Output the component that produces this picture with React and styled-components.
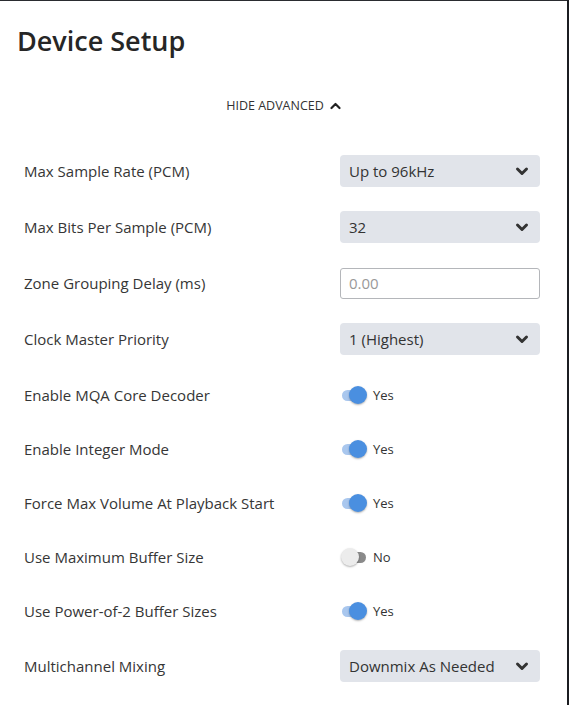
import React, { useState } from 'react';
import styled, { createGlobalStyle } from 'styled-components';

const GlobalStyle = createGlobalStyle`
  html, body {
    margin: 0;
    padding: 0;
    background: #1b1d21;
  }
  body {
    font-family: 'Open Sans', 'Noto Sans', sans-serif;
    color: #333;
  }
`;

const Dialog = styled.div`
  width: 567px;
  height: 705px;
  box-sizing: border-box;
  background: #fff;
  border-top: 1px solid #2a2c30;
  overflow: hidden;
`;

const Title = styled.h1`
  margin: 0;
  padding: 20px 0 0 17px;
  font-size: 27px;
  line-height: 40px;
  font-weight: 600;
  color: #262626;
`;

const AdvancedToggle = styled.button`
  display: flex;
  align-items: center;
  gap: 6px;
  margin: 35px auto 0;
  padding: 0;
  border: none;
  background: none;
  font-family: inherit;
  font-size: 12.5px;
  line-height: 20px;
  color: #333;
  text-transform: uppercase;
  cursor: pointer;
`;

const Settings = styled.div`
  margin-top: 26px;
  padding: 0 27px 0 24px;
`;

const Row = styled.div`
  display: flex;
  align-items: center;
  justify-content: space-between;
  height: ${(p) => p.$h}px;
`;

const Label = styled.div`
  font-size: 15px;
  color: #363636;
`;

const Control = styled.div`
  width: 200px;
  display: flex;
  align-items: center;
`;

const Select = styled.div`
  width: 100%;
  height: 32px;
  box-sizing: border-box;
  display: flex;
  align-items: center;
  justify-content: space-between;
  padding: 0 11px 0 9px;
  background: #e1e4ea;
  border-radius: 4px;
  font-size: 15px;
  color: #333;
`;

const Input = styled.input`
  width: 100%;
  height: 31px;
  box-sizing: border-box;
  padding: 0 8px;
  border: 1px solid #b4b6ba;
  border-radius: 3px;
  font-family: inherit;
  font-size: 15px;
  color: #333;
  &::placeholder {
    color: #999;
  }
`;

const Switch = styled.div`
  position: relative;
  width: 26px;
  height: 18px;
  margin-left: 1px;
  cursor: pointer;
`;

const Track = styled.div`
  position: absolute;
  left: 1px;
  top: 4px;
  width: 24px;
  height: 11px;
  border-radius: 6px;
  background: ${(p) => (p.$on ? '#a9c7ee' : '#8a8a8a')};
`;

const Thumb = styled.div`
  position: absolute;
  top: 0;
  left: ${(p) => (p.$on ? '8px' : '0')};
  width: 18px;
  height: 18px;
  border-radius: 50%;
  background: ${(p) => (p.$on ? '#4a8fe0' : '#ececec')};
  box-shadow: 0 1px 2px rgba(0, 0, 0, 0.3);
`;

const SwitchText = styled.span`
  margin-left: 6px;
  font-size: 13px;
  color: #333;
`;

const ChevronDown = () => (
  <svg width="14" height="10" viewBox="0 0 14 10">
    <polyline points="2.5,3 7,7.5 11.5,3" fill="none" stroke="#333" strokeWidth="3" strokeLinecap="round" strokeLinejoin="round" />
  </svg>
);

const ChevronUp = () => (
  <svg width="11" height="8" viewBox="0 0 11 8">
    <polyline points="1.5,6 5.5,2 9.5,6" fill="none" stroke="#222" strokeWidth="2.2" strokeLinecap="round" strokeLinejoin="round" />
  </svg>
);

const settings = [
  { label: 'Max Sample Rate (PCM)', type: 'select', value: 'Up to 96kHz', h: 57 },
  { label: 'Max Bits Per Sample (PCM)', type: 'select', value: '32', h: 56 },
  { label: 'Zone Grouping Delay (ms)', type: 'input', value: '0.00', h: 56 },
  { label: 'Clock Master Priority', type: 'select', value: '1 (Highest)', h: 56 },
  { label: 'Enable MQA Core Decoder', type: 'switch', value: true, h: 55 },
  { label: 'Enable Integer Mode', type: 'switch', value: true, h: 54 },
  { label: 'Force Max Volume At Playback Start', type: 'switch', value: true, h: 54 },
  { label: 'Use Maximum Buffer Size', type: 'switch', value: false, h: 54 },
  { label: 'Use Power-of-2 Buffer Sizes', type: 'switch', value: true, h: 54 },
  { label: 'Multichannel Mixing', type: 'select', value: 'Downmix As Needed', h: 56 },
];

const SettingControl = ({ item }) => {
  const [on, setOn] = useState(item.value);
  if (item.type === 'select') {
    return (
      <Select>
        {item.value}
        <ChevronDown />
      </Select>
    );
  }
  if (item.type === 'input') {
    return <Input placeholder={item.value} />;
  }
  return (
    <>
      <Switch onClick={() => setOn(!on)}>
        <Track $on={on} />
        <Thumb $on={on} />
      </Switch>
      <SwitchText>{on ? 'Yes' : 'No'}</SwitchText>
    </>
  );
};

const App = () => {
  return (
    <>
      <GlobalStyle />
      <Dialog>
        <Title>Device Setup</Title>
        <AdvancedToggle>
          Hide Advanced
          <ChevronUp />
        </AdvancedToggle>
        <Settings>
          {settings.map((item) => (
            <Row key={item.label} $h={item.h}>
              <Label>{item.label}</Label>
              <Control>
                <SettingControl item={item} />
              </Control>
            </Row>
          ))}
        </Settings>
      </Dialog>
    </>
  );
};

export default App;
